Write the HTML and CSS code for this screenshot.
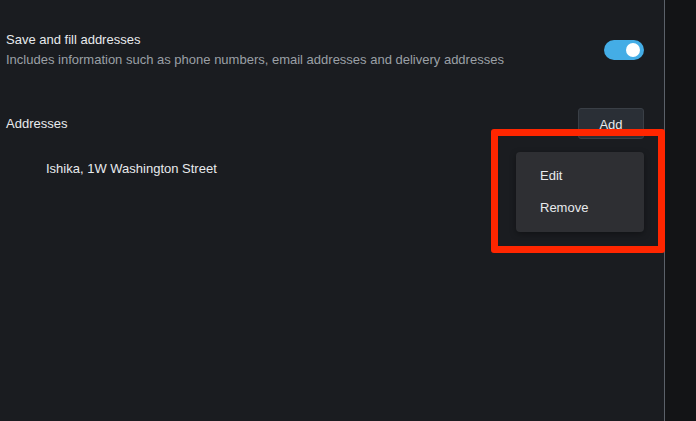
FILE: index.html
```html
<!DOCTYPE html>
<html>
<head>
<meta charset="utf-8">
<link rel="stylesheet" href="styles.css">
</head>
<body>
<div class="page">
  <main class="main">
    <div class="setting">
      <div class="setting-text">
        <div class="title">Save and fill addresses</div>
        <div class="desc">Includes information such as phone numbers, email addresses and delivery addresses</div>
      </div>
      <div class="toggle"><span class="knob"></span></div>
    </div>
    <div class="section-head">
      <div class="title">Addresses</div>
      <button class="add-btn">Add</button>
    </div>
    <div class="address">Ishika, 1W Washington Street</div>

    <div class="menu">
      <div class="menu-item">Edit</div>
      <div class="menu-item">Remove</div>
    </div>
    <div class="highlight"></div>
  </main>
  <aside class="side"></aside>
</div>
</body>
</html>
```

FILE: styles.css
```css
* { box-sizing: border-box; }
html, body {
  margin: 0;
  padding: 0;
  height: 100%;
  background: #131416;
  font-family: "Liberation Sans", Arial, sans-serif;
  font-size: 13px;
  line-height: 20px;
  color: #e8eaed;
}
.page {
  display: flex;
  height: 421px;
  overflow: hidden;
}
.main {
  position: relative;
  width: 665px;
  flex: none;
  background: #1a1c20;
  border-right: 1px solid #5b6169;
  padding: 30px 20px 0 6px;
}
.side {
  flex: 1;
  background: #131416;
}
.setting {
  display: flex;
  align-items: center;
  justify-content: space-between;
}
.title { color: #e8eaed; }
.desc { color: #9aa0a6; }
.toggle {
  width: 40px;
  height: 20px;
  border-radius: 10px;
  background: #44ade6;
  display: flex;
  align-items: center;
  justify-content: flex-end;
  padding-right: 4px;
}
.knob {
  width: 14px;
  height: 14px;
  border-radius: 50%;
  background: #ffffff;
}
.section-head {
  margin-top: 38px;
  display: flex;
  align-items: center;
  justify-content: space-between;
}
.add-btn {
  width: 66px;
  height: 31px;
  background: #2a2f36;
  border: 1px solid #3a3f46;
  border-radius: 3px;
  color: #e8eaed;
  font-family: "Liberation Sans", Arial, sans-serif;
  font-size: 13px;
  padding: 0;
  padding-top: 2px;
}
.address {
  margin-top: 20px;
  padding-left: 40px;
}
.menu {
  position: absolute;
  left: 516px;
  top: 152px;
  width: 128px;
  height: 80px;
  padding: 8px 0;
  background: #2e2f33;
  border-radius: 4px;
  box-shadow: 0 2px 6px rgba(0,0,0,0.35);
}
.menu-item {
  height: 32px;
  line-height: 32px;
  padding-left: 24px;
  color: #e8eaed;
}
.highlight {
  position: absolute;
  left: 491px;
  top: 129px;
  width: 174px;
  height: 124px;
  border: 7px solid #ff2600;
  border-radius: 3px;
}
```
